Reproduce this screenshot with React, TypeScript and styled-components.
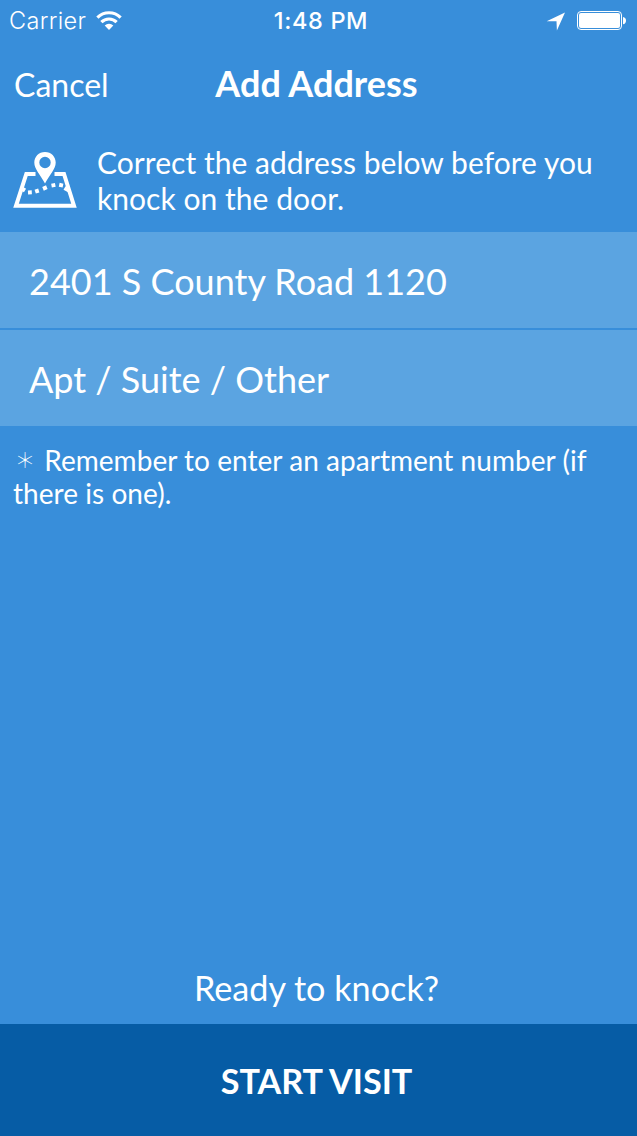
import React from "react";
import styled, { createGlobalStyle } from "styled-components";

const Global = createGlobalStyle`
  * { box-sizing: border-box; }
  body { margin: 0; background: #388eda; }
`;
const Screen = styled.main`
  width: 637px;
  height: 1136px;
  display: flex;
  flex-direction: column;
  background: #388eda;
  color: #fff;
  font-family: Lato, sans-serif;
  overflow: hidden;
  white-space: nowrap;
`;
const StatusBar = styled.div`
  height: 40px;
  display: grid;
  grid-template-columns: 1fr auto 1fr;
  align-items: center;
  padding: 1px 10px 0 9px;
  font-family: Inter, sans-serif;
  font-size: 23.5px;
`;
const StatusGroup = styled.div<{ $end?: boolean }>`
  display: flex;
  align-items: center;
  justify-content: ${(p) => (p.$end ? "flex-end" : "flex-start")};
  gap: ${(p) => (p.$end ? "11px" : "10px")};
`;
const Carrier = styled.span`
  font-weight: 350;
  letter-spacing: 0.35px;
`;
const Time = styled.span`
  padding-left: 6px;
  font-weight: 550;
  letter-spacing: 0.65px;
`;
const NavBar = styled.header`
  height: 88px;
  display: grid;
  grid-template-columns: 1fr auto 1fr;
  align-items: center;
  padding: 0 16px 0 14px;
`;
const Cancel = styled.button`
  justify-self: start;
  border: 0;
  padding: 1px 0 0;
  background: none;
  color: inherit;
  font: 400 32px/40px Lato, sans-serif;
`;
const Title = styled.h1`
  margin: 0 2px 3px 0;
  font-size: 36px;
  line-height: 44px;
  font-weight: 700;
`;
const Intro = styled.section`
  height: 104px;
  display: flex;
  padding: 16px 13px 0;
  gap: 20px;
  font-size: 30px;
  line-height: 36px;
  letter-spacing: 0.04px;
`;
const MapIcon = styled.svg`
  margin-top: 2px;
`;
const Field = styled.div`
  height: 96px;
  margin-bottom: 2px;
  padding: 1px 29px 0;
  display: flex;
  align-items: center;
  background: #5ba4e1;
  font-size: 36px;
`;
const Note = styled.p`
  margin: 16px 13px 0;
  font-size: 28px;
  line-height: 33px;
  letter-spacing: 0.04px;
`;
const Asterisk = styled.span`
  display: inline-block;
  width: 24px;
  height: 33px;
  vertical-align: top;
  font: 100 21px/30px "Noto Sans CJK JP", sans-serif;
  text-indent: 1.5px;
`;
const Ready = styled.p`
  margin: auto 4px 15px 0;
  text-align: center;
  font-size: 34.2px;
  line-height: 42px;
`;
const Start = styled.button`
  height: 112px;
  border: 0;
  padding: 2px 4px 0 0;
  background: #065ca5;
  color: #fff;
  font: 700 34.2px/42px Lato, sans-serif;
`;

export default function App() {
  return (
    <Screen>
      <Global />
      <StatusBar>
        <StatusGroup>
          <Carrier>Carrier</Carrier>
          <svg width="26" height="20" viewBox="0 0 26 20" fill="none" stroke="#fff" strokeWidth="3.2">
            <path d="M1.4 6.6a16.3 16.3 0 0 1 23.2 0M5.4 11.2a10.6 10.6 0 0 1 15.2 0" />
            <path d="M13 19l-4.3-4.4a6.1 6.1 0 0 1 8.6 0z" fill="#fff" stroke="none" />
          </svg>
        </StatusGroup>
        <Time>1:48 PM</Time>
        <StatusGroup $end>
          <svg width="20" height="20" viewBox="0 0 20 20" fill="#fff"><path d="M19 1.5L.7 10.2h9.8l.4 9.3z" /></svg>
          <svg width="50" height="20" viewBox="0 0 50 20" fill="#fff">
            <rect x=".5" y=".5" width="44" height="18" rx="3.5" fill="none" stroke="#fff" />
            <rect x="2" y="2" width="41" height="15" rx="2" />
            <path d="M46 6c4 .3 4 7 0 7.3z" />
          </svg>
        </StatusGroup>
      </StatusBar>
      <NavBar>
        <Cancel>Cancel</Cancel>
        <Title>Add Address</Title>
      </NavBar>
      <Intro>
        <MapIcon width="64" height="64" viewBox="0 0 64 64" fill="none" stroke="#fff" strokeWidth="4">
          <path d="M22.5 28h-9.2L3 59.8h58L51 28h-9.5" />
          <path d="M32 6C25.7 6 21.3 10.7 21.3 16.5C21.3 23 27 28 32 37.5C37 28 42.7 23 42.7 16.5C42.7 10.7 38.3 6 32 6ZM32 10.8a5.7 5.7 0 1 1 0 11.4a5.7 5.7 0 1 1 0-11.4Z" fill="#fff" fillRule="evenodd" stroke="none" />
          <path d="M8 42l4 2.5M15 46.5l3.8-.2M22.2 45.7l3.6-1.2M30 42.8l3.8-1.6M38.5 39.6l3.8-.7M46.2 38.8l3.8.8M51.5 42l4.5 2.5" />
        </MapIcon>
        <div>Correct the address below before you<br />knock on the door.</div>
      </Intro>
      <Field>2401 S County Road 1120</Field>
      <Field>Apt / Suite / Other</Field>
      <Note><Asterisk>＊</Asterisk> Remember to enter an apartment number (if<br />there is one).</Note>
      <Ready>Ready to knock?</Ready>
      <Start>START VISIT</Start>
    </Screen>
  );
}
